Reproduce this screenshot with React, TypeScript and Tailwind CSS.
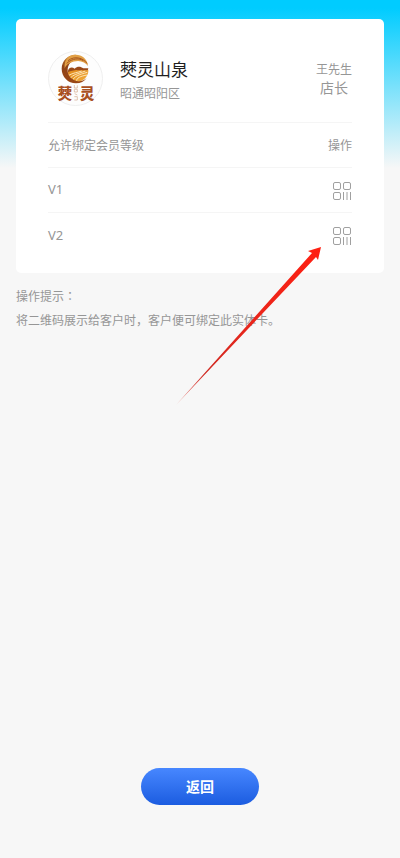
import React from "react";

const levels = ["V1", "V2"];

function Logo() {
  return (
    <svg viewBox="24 21 165 165" className="size-[55px] shrink-0" role="img" aria-label="僰灵">
      <defs>
        <linearGradient id="field" x1="0" y1="0" x2="1" y2="1">
          <stop offset="0" stopColor="#e08a1e" />
          <stop offset="1" stopColor="#f3ae3c" />
        </linearGradient>
        <linearGradient id="swirl" x1="0" y1="0" x2="0" y2="1">
          <stop offset="0" stopColor="#c98432" />
          <stop offset="0.4" stopColor="#8f4318" />
          <stop offset="1" stopColor="#9a4715" />
        </linearGradient>
      </defs>
      <circle cx="106.5" cy="103.5" r="81" fill="#fdfdfd" stroke="#efefef" strokeWidth="3" />
      <path d="M84 80C87 70 96 68 104 74C112 66 122 67 130 73L145 73L143 80L84 86Z" fill="#9a4a18" />
      <path d="M84 84C100 76 122 80 145 78C146 98 130 112 110 114C94 112 84 100 84 84Z" fill="url(#field)" />
      <g fill="none" stroke="#fff1cf" strokeWidth="2.5">
        <path d="M86 94C100 86 112 86 125 81" />
        <path d="M90 103C99 92 112 90 136 81" />
        <path d="M98 110C101 97 117 92 142 85" />
        <path d="M110 112C108 102 122 96 142 93" />
      </g>
      <path d="M108 32C84 32 65 50 65 74C65 98 84 118 108 118C122 118 133 112 140 102C131 110 120 113 111 111C94 108 83 95 83 79C83 60 94 50 110 48C106 42 104 36 108 32Z" fill="url(#swirl)" />
      <path d="M86 38C112 24 142 38 144 66C134 52 114 44 88 58C80 62 76 68 74 74C72 58 76 46 86 38Z" fill="#e2a045" />
      <path d="M84 50C104 34 130 42 141 58M80 58C98 42 118 42 130 50" fill="none" stroke="#a9591f" strokeWidth="3" />
      <text x="53" y="165" fontSize="43" fontWeight="900" fill="#a9501f" fontFamily="'Noto Sans CJK SC', sans-serif">僰</text>
      <text x="120" y="165" fontSize="43" fontWeight="900" fill="#a9501f" fontFamily="'Noto Sans CJK SC', sans-serif">灵</text>
      <g fill="none" stroke="#d3a78b" strokeWidth="2">
        <path d="M103 123v9h9v-8M103 136h9v8h-9zM104 149l8 4M103 158h9v10h-9" />
      </g>
    </svg>
  );
}

function CodeIcon() {
  return (
    <svg viewBox="0 0 20 20" className="size-5" fill="none" stroke="#a0a0a0" aria-hidden="true">
      <rect x="1.5" y="1.5" width="7" height="7" rx="1.5" />
      <rect x="11.5" y="1.5" width="7" height="7" rx="1.5" />
      <rect x="1.5" y="11.5" width="7" height="7" rx="1.5" />
      <path d="M11.5 11v8M15 11v8M18.5 11v8" />
    </svg>
  );
}

function Arrow() {
  return (
    <svg viewBox="0 0 145 158" className="pointer-events-none absolute top-[247px] left-[176px] h-[158px] w-[145px]" aria-hidden="true">
      <defs>
        <linearGradient id="shaft" gradientUnits="userSpaceOnUse" x1="0" y1="158" x2="145" y2="0">
          <stop offset="0" stopColor="#e0342c" stopOpacity="0.5" />
          <stop offset="0.2" stopColor="#cf2a22" />
          <stop offset="0.5" stopColor="#e8261c" />
          <stop offset="1" stopColor="#ff2012" />
        </linearGradient>
      </defs>
      <path d="M0 158L136 6L132 4L145 0L142 13L140 10Z" fill="url(#shaft)" />
    </svg>
  );
}

export default function App() {
  return (
    <div className="relative flex min-h-screen flex-col bg-[#f7f7f7] bg-[linear-gradient(180deg,#00ccff_0px,#00ccff_8px,#f7f7f7_168px)] px-4 pt-[19px] font-['Noto_Sans','Noto_Sans_CJK_SC',sans-serif] text-xs text-[#969696]">
      <main className="rounded-[5px] bg-white px-8 pt-8 pb-[15px]">
        <header className="flex items-center pb-4">
          <Logo />
          <div className="ml-[17px] flex-1 pt-0.5">
            <h1 className="text-[17px] leading-7 text-[#1f1f1f]">僰灵山泉</h1>
            <p className="leading-5">昭通昭阳区</p>
          </div>
          <div className="text-center">
            <p className="leading-[18px]">王先生</p>
            <p className="text-sm leading-[18px]">店长</p>
          </div>
        </header>
        <table className="w-full">
          <thead>
            <tr className="h-[45px] border-t border-[#f5f5f5]">
              <th className="p-0 pt-0.5 text-left font-normal">允许绑定会员等级</th>
              <th className="p-0 pt-0.5 text-right font-normal">操作</th>
            </tr>
          </thead>
          <tbody>
            {levels.map((level) => (
              <tr key={level} className="h-[45px] border-t border-[#f5f5f5]">
                <td className="p-0 text-[13px]">{level}</td>
                <td className="p-0 pt-0.5">
                  <button type="button" aria-label={`${level} 二维码`} className="ml-auto block">
                    <CodeIcon />
                  </button>
                </td>
              </tr>
            ))}
          </tbody>
        </table>
      </main>
      <section className="pt-[11px] leading-6">
        <p>操作提示<span className="font-['Noto_Sans_CJK_JP',sans-serif]" lang="ja">：</span></p>
        <p>将二维码展示给客户时，客户便可绑定此实体卡。</p>
      </section>
      <button type="button" className="mx-auto mt-auto mb-[53px] h-[37px] w-[118px] rounded-full bg-linear-to-b from-[#4787ff] to-[#1b5ce0] text-sm font-bold text-white">
        返回
      </button>
      <Arrow />
    </div>
  );
}
